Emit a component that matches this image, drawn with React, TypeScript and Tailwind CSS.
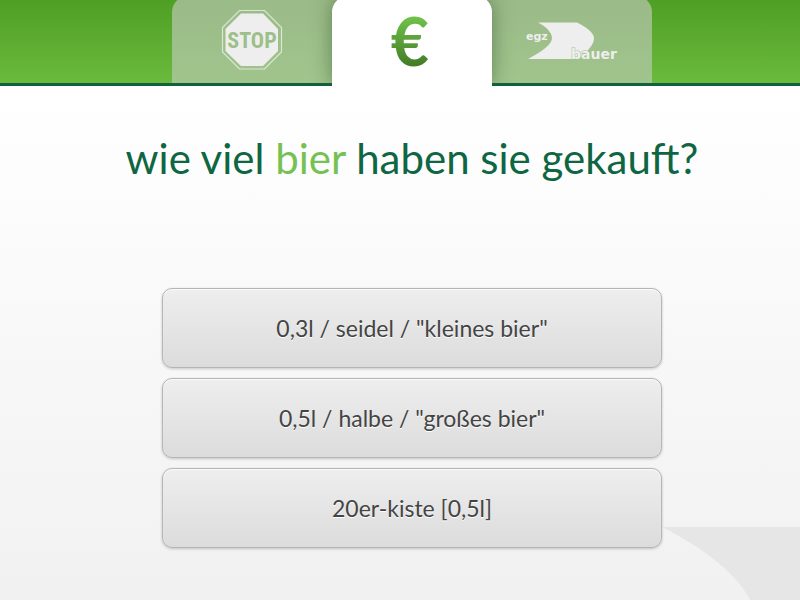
import clsx from "clsx";
import type { ReactNode } from "react";

const StopSign = () => (
  <svg width="62" height="62" viewBox="0 0 62 62" aria-hidden="true">
    <polygon
      points="18.5,1.5 43.5,1.5 60.5,18.5 60.5,43 43.5,60 18.5,60 1.5,43 1.5,18.5"
      fill="none"
      stroke="#dbe6d4"
      strokeWidth="1.2"
    />
    <polygon
      points="20,4.5 42,4.5 57,20 57,42 42,57 20,57 4.5,42 4.5,20"
      fill="#eeeeee"
    />
    <text
      x="31"
      y="39"
      textAnchor="middle"
      fill="#9dbf8a"
      className="font-['Liberation_Sans_Narrow','Roboto_Condensed','Liberation_Sans',sans-serif] text-[22px] font-bold"
    >
      STOP
    </text>
  </svg>
);

const BauerLogo = () => (
  <svg width="92" height="44" viewBox="0 0 92 44" aria-hidden="true">
    <path
      d="M12 4.500H51Q68 13 68 20.500Q68 28 53 41H2C17 33 26 26 26 20C26 14 19 8 12 4.500Z"
      fill="#eeeeee"
    />
    <g
      fill="#eeeeee"
      stroke="#a0c18d"
      strokeWidth="1"
      paintOrder="stroke"
      className="font-['DejaVu_Sans',sans-serif] font-bold"
    >
      <text x="0" y="22" className="text-[11px]">
        egz
      </text>
      <text x="45" y="41" className="text-[14px]">
        bauer
      </text>
    </g>
  </svg>
);

const Euro = () => (
  <span className="bg-linear-to-b from-[#72c44b] from-20% to-[#3f7624] to-85% bg-clip-text pr-1 font-['Lato',sans-serif] text-[66px] leading-[84px] font-bold text-transparent">
    €
  </span>
);

type TabProps = { label: string; active?: boolean; children: ReactNode };

const Tab = ({ label, active, children }: TabProps) => (
  <button
    type="button"
    aria-label={label}
    className={clsx(
      "flex w-40 items-center justify-center",
      active
        ? "h-[90px] rounded-t-2xl bg-white shadow-[0_0_20px_rgba(50,80,40,0.55)]"
        : "h-[87px]",
    )}
  >
    {children}
  </button>
);

const options = [
  '0,3l / seidel / "kleines bier"',
  '0,5l / halbe / "großes bier"',
  "20er-kiste [0,5l]",
];

const App = () => {
  return (
    <div className="relative flex min-h-screen flex-col bg-linear-to-b from-white from-15% to-[#f1f1f1] font-['Lato',sans-serif]">
      <svg
        className="absolute right-0 bottom-0"
        width="138"
        height="73"
        viewBox="0 0 138 73"
        aria-hidden="true"
      >
        <path d="M0 0H138V73H88C76 48 42 21 0 0Z" fill="#e6e6e6" />
      </svg>

      <header className="flex h-[86px] justify-center overflow-hidden bg-linear-to-b from-[#509f25] from-0% via-[#6aba3d] via-96% to-[#0f6240] to-96% pl-6">
        <nav className="-mt-1 flex h-[87px] rounded-t-2xl bg-linear-to-b from-[#9aba87] to-[#a1c48d]">
          <Tab label="Stop">
            <StopSign />
          </Tab>
          <Tab label="Preis" active>
            <Euro />
          </Tab>
          <Tab label="egz bauer">
            <BauerLogo />
          </Tab>
        </nav>
      </header>

      <main className="relative flex flex-col items-center pt-[42px] pb-12 pl-6">
        <h1 className="text-[42px] leading-[60px] text-[#0f6643]">
          wie viel <span className="text-[#76c152]">bier</span> haben sie
          gekauft?
        </h1>
        <div className="mt-[100px] flex w-full max-w-[500px] flex-col gap-2.5">
          {options.map((option) => (
            <button
              key={option}
              type="button"
              className="h-20 rounded-[10px] border border-[#b5b5b5] bg-linear-to-b from-[#eeeeee] to-[#dcdcdc] text-[23px] text-[#444444] shadow-[0_1px_3px_rgba(0,0,0,0.2),inset_0_1px_1px_rgba(255,255,255,0.8)] text-shadow-[0_1px_0_#ffffff]"
            >
              {option}
            </button>
          ))}
        </div>
      </main>
    </div>
  );
};

export default App;
